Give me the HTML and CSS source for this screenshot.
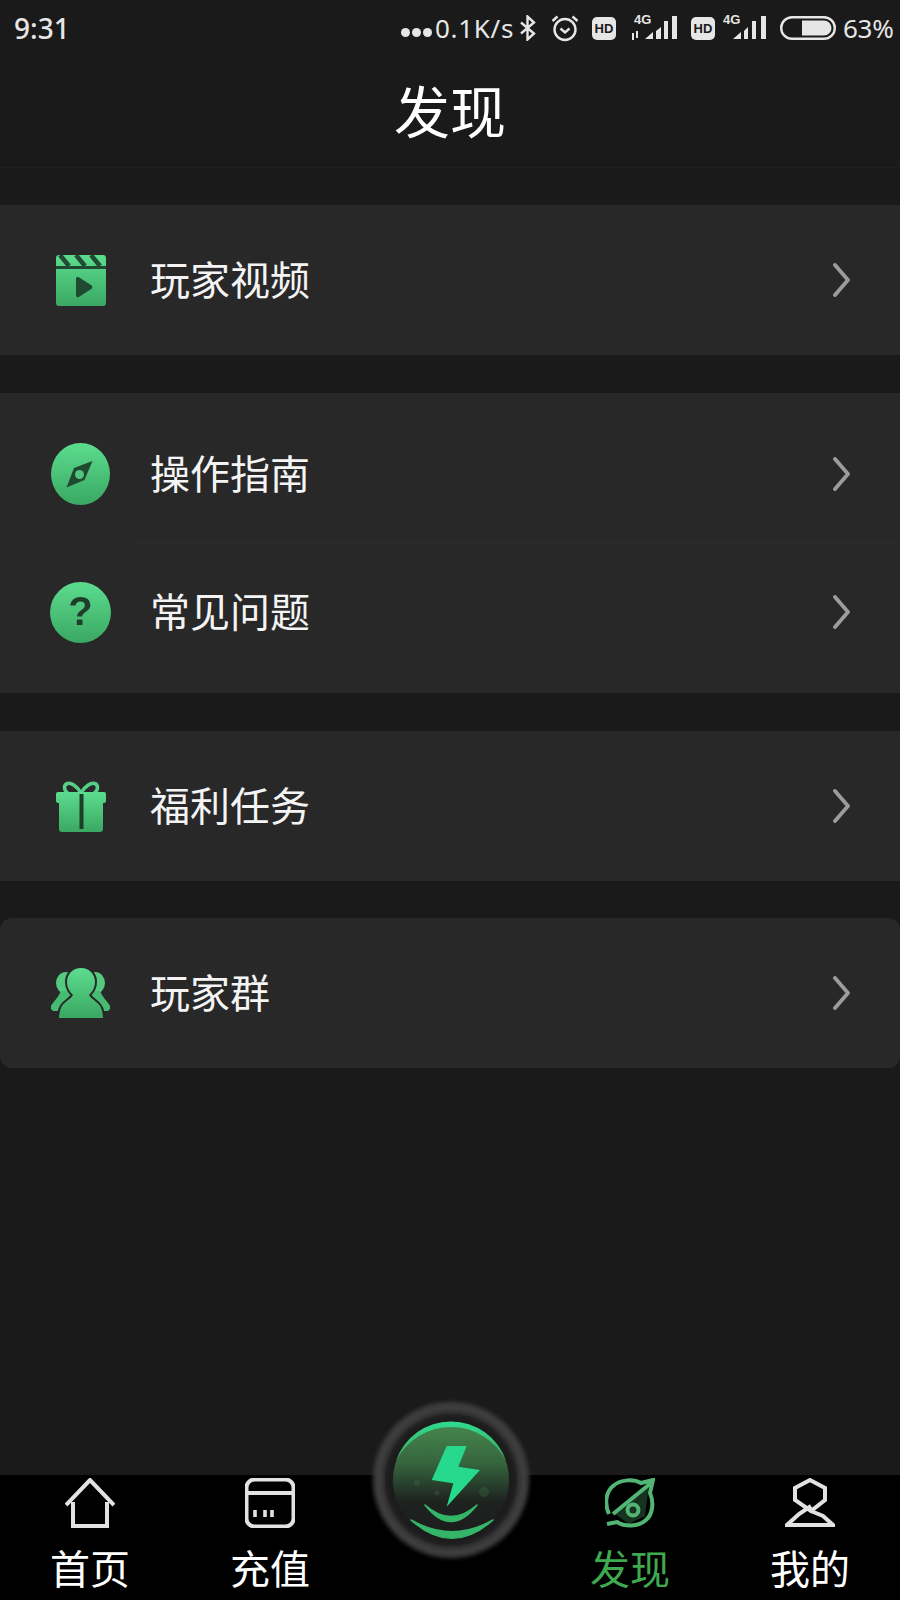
FILE: index.html
```html
<!DOCTYPE html>
<html lang="zh-CN">
<head>
<meta charset="utf-8">
<title>发现</title>
<link rel="stylesheet" href="styles.css">
</head>
<body>
<svg class="defs" width="0" height="0" aria-hidden="true">
  <defs>
    <linearGradient id="g" x1="0" y1="0" x2="0" y2="1">
      <stop offset="0" stop-color="#5cdc8e"/>
      <stop offset="1" stop-color="#3aa862"/>
    </linearGradient>
    <linearGradient id="dome" x1="0" y1="0" x2="0" y2="1">
      <stop offset="0" stop-color="#47884f"/>
      <stop offset="0.35" stop-color="#36663e"/>
      <stop offset="0.68" stop-color="#1e2320"/>
      <stop offset="1" stop-color="#1c1c1c"/>
    </linearGradient>
    <linearGradient id="arc" x1="0" y1="0" x2="0" y2="1">
      <stop offset="0" stop-color="#2fdc90"/>
      <stop offset="1" stop-color="#3aa860"/>
    </linearGradient>
    <filter id="soft" x="-10%" y="-10%" width="120%" height="120%"><feGaussianBlur stdDeviation="2"/></filter>
  </defs>
</svg>
<div class="page">
  <header class="head">
    <div class="status">
      <span class="time">9:31</span>
      <div class="status-right">
        <span class="dots"><i></i><i></i><i></i></span>
        <span class="speed">0.1K/s</span>
        <svg class="si" width="18" height="26" viewBox="0 0 18 26"><path class="st" d="M2 7.500 15 18.500 8.500 24.500V1.500L15 7.500 2 18.500"/></svg>
        <svg class="si alarm" width="28" height="28" viewBox="0 0 28 28"><circle class="st" cx="14" cy="15.500" r="10.500"/><path class="st" d="M9.500 14.500 14 18.500 18.500 14.500M1.500 7 6.500 2.500M26.500 7 21.500 2.500"/></svg>
        <span class="hd hd1">HD</span>
        <svg class="si sig1" width="47" height="34" viewBox="0 -4 47 34"><text class="four" x="3" y="9">4G</text><path class="st1" d="M2 18v7M6 16v7"/><path class="fill" d="M14 24h8v-7zM25 24h5V12l-5 4zM33 24h4V6h-4zM41 24h5V1h-5z"/></svg>
        <span class="hd hd2">HD</span>
        <svg class="si sig2" width="44" height="34" viewBox="0 -4 44 34"><text class="four" x="0" y="9">4G</text><path class="fill" d="M10 24h8v-7zM21 24h4V12l-4 4zM29 24h4V6h-4zM38 24h5V1h-5z"/></svg>
        <svg class="si batt" width="56" height="26" viewBox="0 0 56 26"><rect class="st" x="1.200" y="2.200" width="53.600" height="21.600" rx="10.800"/><path class="fill" d="M22 5.500h22a7.500 7.500 0 0 1 0 15H22z"/></svg>
        <span class="pct">63%</span>
      </div>
    </div>
    <h1 class="title">发现</h1>
  </header>

  <main class="list">
    <section class="card">
      <div class="row">
        <span class="ico">
          <svg width="50" height="51" viewBox="0 0 50 51"><path fill="url(#g)" d="M3 0h44a3 3 0 0 1 3 3v8H0V3a3 3 0 0 1 3-3zM0 14h50v34a3 3 0 0 1-3 3H3a3 3 0 0 1-3-3z"/><rect class="dark" x="0" y="11" width="50" height="3"/><path class="cut" d="M4 0 13 11M20 0 29 11M35 0 44 11"/><path class="dark" d="M20 23.500v17a1.800 1.800 0 0 0 2.800 1.500l12.500-8a2.200 2.200 0 0 0 0-3.800l-12.500-8a1.800 1.800 0 0 0-2.800 1.300z"/></svg>
        </span>
        <span class="label">玩家视频</span>
        <svg class="chev" width="17" height="34" viewBox="0 0 17 34"><path d="M2 2 15 17 2 32"/></svg>
      </div>
    </section>

    <section class="card">
      <div class="row row-down">
        <span class="ico">
          <svg width="59" height="62" viewBox="0 0 59 62"><ellipse cx="29.500" cy="31" rx="29.500" ry="31" fill="url(#g)"/><path class="dark" d="M41.500 18 33.500 37 15.500 44.500 23 25z"/><circle cx="28.500" cy="31.500" r="4.500" fill="#52c47e"/></svg>
        </span>
        <span class="label">操作指南</span>
        <svg class="chev" width="17" height="34" viewBox="0 0 17 34"><path d="M2 2 15 17 2 32"/></svg>
      </div>
      <div class="divider"></div>
      <div class="row row-up">
        <span class="ico">
          <svg width="61" height="61" viewBox="0 0 61 61"><circle cx="30.500" cy="30.500" r="30.500" fill="url(#g)"/><text class="q" x="30.500" y="43">?</text></svg>
        </span>
        <span class="label">常见问题</span>
        <svg class="chev" width="17" height="34" viewBox="0 0 17 34"><path d="M2 2 15 17 2 32"/></svg>
      </div>
    </section>

    <section class="card">
      <div class="row">
        <span class="ico">
          <svg width="50" height="51" viewBox="0 0 50 51"><path class="bow" d="M25 12C21 5 15 1.500 11.500 2.500 7 4 8 10 12 12M25 12C29 5 35 1.500 38.500 2.500 43 4 42 10 38 12"/><path fill="url(#g)" d="M2 11h46a2 2 0 0 1 2 2v7a2 2 0 0 1-2 2h-1v26a3 3 0 0 1-3 3H6a3 3 0 0 1-3-3V22H2a2 2 0 0 1-2-2v-7a2 2 0 0 1 2-2z"/><rect class="darkfill" x="23.500" y="13" width="4" height="35"/></svg>
        </span>
        <span class="label">福利任务</span>
        <svg class="chev" width="17" height="34" viewBox="0 0 17 34"><path d="M2 2 15 17 2 32"/></svg>
      </div>
    </section>

    <section class="card card-last">
      <div class="row">
        <span class="ico">
          <svg width="59" height="50" viewBox="0 0 59 50"><ellipse cx="15" cy="15" rx="10" ry="11" fill="#54ca81"/><ellipse cx="44" cy="15" rx="10" ry="11" fill="#54ca81"/><path fill="#47bb72" d="M10 23C7 30 2 34 0 38v3l2 2h12l10-20zM49 23c3 7 8 11 10 15v3l-2 2H45L35 23z"/><path class="gap" fill="url(#g)" d="M30 0c8 0 14 6 14 14 0 6-3 10-6 13 3 5 8 6 11 11 2 3 3 9 3 12H8c0-3 1-9 3-12 3-5 8-6 11-11-3-3-6-7-6-13 0-8 6-14 14-14z"/></svg>
        </span>
        <span class="label">玩家群</span>
        <svg class="chev" width="17" height="34" viewBox="0 0 17 34"><path d="M2 2 15 17 2 32"/></svg>
      </div>
    </section>
  </main>

  <nav class="tabs">
    <a class="tab">
      <svg width="50" height="50" viewBox="0 0 50 50"><path class="ti" d="M1 27 25 2 49 27M8 24V48H42V24"/></svg>
      <span>首页</span>
    </a>
    <a class="tab">
      <svg width="50" height="50" viewBox="0 0 50 50"><rect class="ti" x="1.500" y="1.500" width="47" height="47" rx="8"/><path class="ti" d="M2 15H48"/><path class="ti-dots" d="M10 32v7M20 32v7M27 32v7"/></svg>
      <span>充值</span>
    </a>
    <div class="tab tab-gap"></div>
    <a class="tab tab-on">
      <svg width="50" height="50" viewBox="0 0 50 50"><path class="leaf" d="M10 36 44 6 40 38 24 46z"/><path class="ti" d="M4 36C-1 25 1 14 8 8 16 1 29 1 36 5L48 2 45 15C49 24 48 36 41 42 33 49 20 49 12 44L2 46M8 36 46 5"/><circle class="ti" cx="28" cy="32" r="5.500"/></svg>
      <span>发现</span>
    </a>
    <a class="tab">
      <svg width="50" height="50" viewBox="0 0 50 50"><path class="ti" d="M25 2 40 10V22L26 33 10 22V10zM26 33 38 38 48 47H2L14 36 26 28"/></svg>
      <span>我的</span>
    </a>
    <div class="charge">
      <svg width="170" height="170" viewBox="0 0 170 170">
        <circle cx="85" cy="85" r="78" class="ring"/>
        <circle cx="85" cy="85" r="67" class="ring-in"/>
        <circle cx="85" cy="85" r="58" fill="url(#dome)"/>
        <path fill="url(#arc)" d="M30 66A58 58 0 0 1 140 66 61.500 61.500 0 0 0 30 66z"/>
        <g class="spark"><circle cx="62" cy="57" r="4"/><circle cx="51" cy="88" r="3"/><circle cx="71" cy="98" r="2.500"/><circle cx="118" cy="97" r="5"/></g>
        <path fill="#27d98d" d="M80.700 51H100.700L92.300 71.700 114 75 80.700 111.700 87.300 88.300 65.700 85z"/>
        <path class="wave" d="M59 110Q85 143 111 110 85 133 59 110z"/>
        <path class="wave" d="M45 125Q86 161.600 127 125 86 148.300 45 125z"/>
      </svg>
    </div>
  </nav>
</div>
</body>
</html>
```

FILE: styles.css
```css
* { box-sizing: border-box; }
html, body { margin: 0; padding: 0; }
body {
  background: #1a1a1a;
  color: #f6f6f6;
  font-family: "Noto Sans CJK SC", "Noto Sans", sans-serif;
}
.defs { position: absolute; }
.page {
  width: 900px;
  height: 1600px;
  display: flex;
  flex-direction: column;
  position: relative;
  overflow: hidden;
}
.head { height: 168px; border-bottom: 1px solid #1f1f1f; }
.status {
  height: 56px;
  display: flex;
  align-items: center;
  padding: 0 8px 0 14px;
  color: #e6e6e6;
  font-family: "Noto Sans", sans-serif;
  font-size: 26px;
}
.time { font-weight: 500; font-size: 28px; line-height: 1; }
.status-right { margin-left: auto; display: flex; align-items: center; }
.dots { display: flex; gap: 2px; margin-top: 9px; }
.dots i { width: 9px; height: 9px; border-radius: 50%; background: #e6e6e6; }
.speed { margin-left: 3px; width: 77px; line-height: 1; letter-spacing: 0.7px; white-space: nowrap; }
.si { display: block; margin-left: 7px; }
.alarm { margin-left: 14px; }
.st { fill: none; stroke: #e6e6e6; stroke-width: 2.4; }
.st1 { fill: none; stroke: #e6e6e6; stroke-width: 2; }
.fill { fill: #e6e6e6; }
.four { fill: #e6e6e6; font: 700 13px "Liberation Sans", sans-serif; }
.hd {
  width: 24px;
  height: 23px;
  margin-left: 13px;
  border-radius: 5px;
  background: #e6e6e6;
  color: #1a1a1a;
  font: 700 13px/23px "Liberation Sans", sans-serif;
  text-align: center;
}
.sig1 { margin-left: 15px; }
.hd2 { margin-left: 13px; }
.sig2 { margin-left: 8px; }
.batt { margin-left: 13px; }
.pct { margin-left: 7px; width: 49px; line-height: 1; letter-spacing: -0.3px; }
.title {
  margin: 0;
  height: 111px;
  padding-bottom: 6px;
  font-size: 56px;
  font-weight: 400;
  line-height: 105px;
  text-align: center;
  color: #fff;
}
.list { padding-top: 37px; }
.card { background: #282828; margin-bottom: 38px; }
.card-last { border-radius: 12px; margin-top: -1px; }
.row {
  height: 150px;
  display: flex;
  align-items: center;
  padding-left: 50px;
  padding-right: 50px;
}
.row-down { padding-top: 12px; }
.row-up { padding-bottom: 12px; }
.divider { height: 1px; margin: -1px 0 0 138px; background: #2e2e2e; }
.ico { width: 61px; display: flex; justify-content: center; flex: none; }
.ico svg { display: block; filter: blur(0.4px); }
.label { margin-left: 39px; padding-bottom: 4px; font-size: 40px; line-height: 1; color: #f4f4f4; }
.chev { margin-left: auto; display: block; filter: blur(0.3px); }
.chev path { fill: none; stroke: #9c9c9c; stroke-width: 3.8; stroke-linecap: round; stroke-linejoin: round; }
.cut { fill: none; stroke: #234a32; stroke-width: 4.5; }
.dark { fill: #1f4a31; }
.darkfill { fill: #1c3d2a; }
.q { fill: #1f3d2b; font: 700 40px "Liberation Sans", sans-serif; text-anchor: middle; }
.bow { fill: none; stroke: #55cf85; stroke-width: 3.6; }
.gap { stroke: #282828; stroke-width: 4; paint-order: stroke; }
.tabs {
  margin-top: auto;
  height: 125px;
  background: #000;
  display: flex;
  position: relative;
  color: #fff;
}
.tab {
  width: 180px;
  display: flex;
  flex-direction: column;
  align-items: center;
  padding-top: 3px;
}
.tab svg { display: block; filter: blur(0.5px); }
.tab span { font-size: 40px; line-height: 40px; margin-top: 19px; }
.ti { fill: none; stroke: #e2e2e2; stroke-width: 4; }
.ti-dots { fill: none; stroke: #e2e2e2; stroke-width: 3.6; }
.tab-on { color: #3fa94f; }
.tab-on .ti { stroke: #52b574; }
.leaf { fill: #16331f; }
.charge { position: absolute; left: 366px; top: -80px; }
.charge svg { display: block; filter: none; }
.ring { fill: #3c3c3c; filter: url(#soft); }
.ring-in { fill: #1b1b1b; filter: url(#soft); }
.spark { fill: #3c6a48; opacity: 0.35; }
.wave { fill: #35b568; stroke: #35b568; stroke-width: 1.5; stroke-linejoin: round; }
```
